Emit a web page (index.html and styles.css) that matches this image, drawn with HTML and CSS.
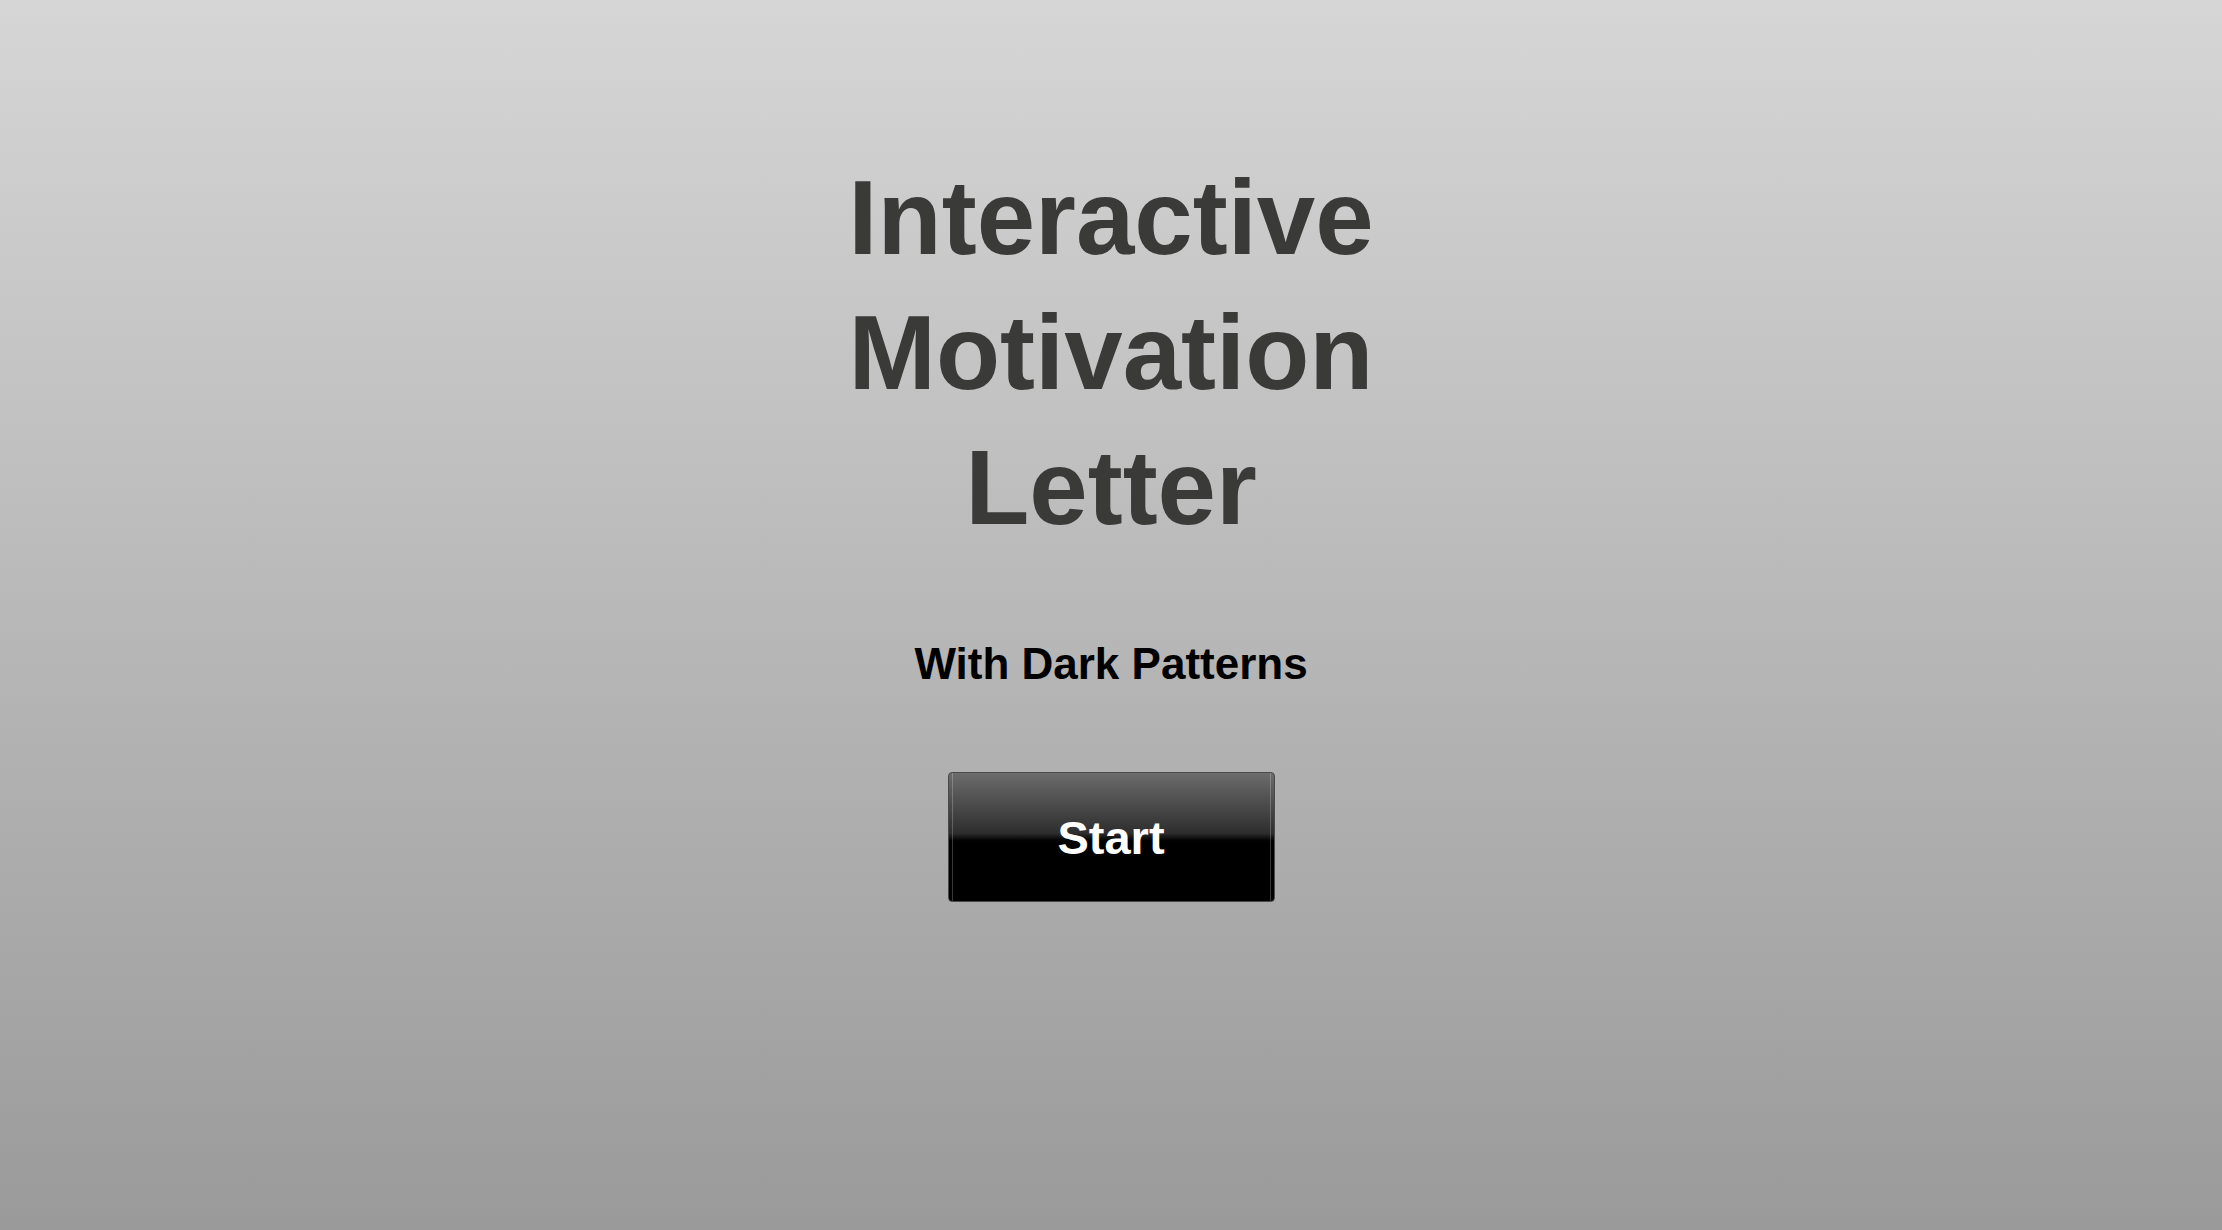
FILE: index.html
```html
<!DOCTYPE html>
<html lang="en">
<head>
<meta charset="utf-8">
<title>Interactive Motivation Letter</title>
<link rel="stylesheet" href="styles.css">
</head>
<body>
<main class="intro">
  <h1 class="title">Interactive Motivation Letter</h1>
  <h2 class="subtitle">With Dark Patterns</h2>
  <button class="start-btn" type="button">Start</button>
</main>
</body>
</html>
```

FILE: styles.css
```css
html, body {
  margin: 0;
  padding: 0;
  height: 100%;
}
body {
  background: linear-gradient(to bottom, #d6d6d6 0%, #9a9a9a 100%);
  font-family: "Liberation Sans", Arial, sans-serif;
}
.intro {
  display: flex;
  flex-direction: column;
  align-items: center;
  padding-top: 150px;
}
.title {
  margin: 0;
  width: 580px;
  text-align: center;
  font-size: 105px;
  line-height: 135px;
  font-weight: 700;
  color: #3a3a38;
}
.subtitle {
  margin: 85px 0 0;
  font-size: 44px;
  line-height: 48px;
  font-weight: 700;
  color: #000;
}
.start-btn {
  position: relative;
  margin-top: 84px;
  width: 327px;
  height: 130px;
  border: 1px solid #4a4a4a;
  border-radius: 4px;
  background: linear-gradient(to bottom, #6c6c6c 0%, #2e2e2e 47%, #000 53%, #000 100%);
  color: #fff;
  font-family: "Liberation Sans", Arial, sans-serif;
  font-size: 47px;
  font-weight: 700;
  padding: 0;
  cursor: pointer;
}
.start-btn::before,
.start-btn::after {
  content: "";
  position: absolute;
  top: 0;
  bottom: 0;
  width: 1px;
  background: rgba(255, 255, 255, 0.22);
}
.start-btn::before { left: 3px; }
.start-btn::after { right: 3px; }
```
